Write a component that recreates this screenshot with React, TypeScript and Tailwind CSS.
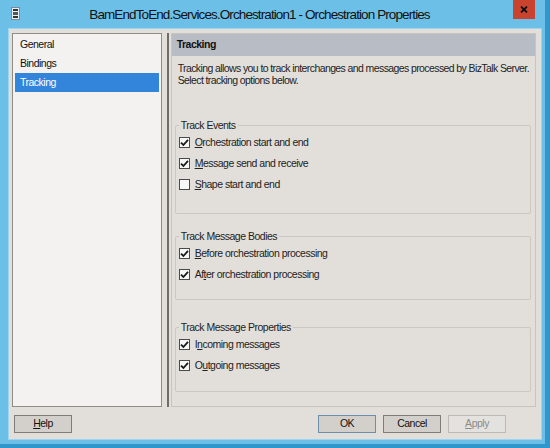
import React from "react";

const font = { fontFamily: '"Liberation Sans", Arial, sans-serif' };

// Checkbox glyph, Win8 style
const Check: React.FC<{ on: boolean }> = ({ on }) => (
  <span className="w-[11px] h-[11px] border border-[#4a4a4a] bg-[#f7f7f7] flex items-center justify-center shrink-0">
    {on && (
      <svg width="9" height="9" viewBox="0 0 9 9">
        <path d="M1 4.6 L3.4 7 L8 1.8" fill="none" stroke="#1a1a1a" strokeWidth="1.8" />
      </svg>
    )}
  </span>
);

// label with an underlined accelerator key
const Acc: React.FC<{ text: string; at: number }> = ({ text, at }) => (
  <span>
    {text.slice(0, at)}
    <span className="underline underline-offset-[1px]">{text[at]}</span>
    {text.slice(at + 1)}
  </span>
);

type Item = { text: string; at: number; on: boolean };

const Group: React.FC<{ title: string; items: Item[]; h: string }> = ({ title, items, h }) => (
  <fieldset className={`border border-[#cbc8c3] rounded-[2px] ml-[3px] mr-[4px] px-[3px] ${h}`}>
    <legend className="px-[2px] text-[#222]">{title}</legend>
    <div className="flex flex-col gap-[9px] pt-[3px]">
      {items.map((it) => (
        <div key={it.text} className="flex items-center gap-[5px] h-[12px]">
          <Check on={it.on} />
          <Acc text={it.text} at={it.at} />
        </div>
      ))}
    </div>
  </fieldset>
);

const Button: React.FC<{ children: React.ReactNode; kind?: "def" | "normal" | "off" }> = ({
  children,
  kind = "normal",
}) => {
  const look =
    kind === "def"
      ? "border-[#6d8fae] bg-[#d3d0cc] text-[#111]"
      : kind === "off"
      ? "border-[#bdbab6] bg-[#e4e2df] text-[#8d8b88]"
      : "border-[#7f7c79] bg-[#d3d0cc] text-[#111]";
  return (
    <div className={`w-[58px] h-[18px] border flex items-center justify-center ${look}`}>{children}</div>
  );
};

export default function App() {
  return (
    <div
      className="w-[550px] h-[448px] bg-[#6cc0e8] flex flex-col border-r-[5px] border-b-[4px] border-[#2f97cc] text-[10.5px] tracking-[-0.5px]"
      style={font}
    >
      {/* title bar */}
      <div className="h-[28px] flex items-start relative shrink-0">
        <div className="absolute left-[11px] top-[7px] w-[9px] h-[13px] bg-[#e8eef3] border border-[#7a8a99] flex flex-col items-center justify-center gap-[1px]">
          <span className="w-[5px] h-[2px] bg-[#333]" />
          <span className="w-[5px] h-[3px] bg-[#555]" />
          <span className="w-[5px] h-[2px] bg-[#333]" />
        </div>
        <div className="flex-1 text-center pt-[5px] text-[13.5px] tracking-[-0.9px] text-[#111] pr-[26px]">
          BamEndToEnd.Services.Orchestration1 - Orchestration Properties
        </div>
        <div className="absolute right-[10px] top-0 w-[22px] h-[19px] bg-[#c9432f] flex items-center justify-center">
          <svg width="8" height="7" viewBox="0 0 8 7">
            <path d="M1 0.5 L7 6.5 M7 0.5 L1 6.5" stroke="#111" strokeWidth="1.8" />
          </svg>
        </div>
      </div>

      {/* client area */}
      <div className="flex-1 ml-[8px] mr-[3px] mb-[4px] bg-[#e2dfdb] flex flex-col border border-[#9fd3ee]">
        <div className="flex h-[374px] mt-[4px] ml-[3px] mr-[5px] gap-[5px]">
          {/* nav list */}
          <div className="w-[150px] bg-[#f3f2f0] border border-[#8f8d8a] pt-[1px] px-[2px] flex flex-col text-[#111]">
            <div className="h-[19px] flex items-center pl-[5px]">General</div>
            <div className="h-[19px] flex items-center pl-[5px]">Bindings</div>
            <div className="h-[19px] flex items-center pl-[5px] bg-[#3385db] text-white">Tracking</div>
          </div>

          {/* properties page */}
          <div className="flex-1 border-l-[2px] border-[#6f6d6a] pl-[2px]">
            <div className="h-full border border-[#c8c5c1] flex flex-col">
              <div className="h-[22px] bg-[#b8bcc5] flex items-center pl-[5px] font-bold text-[#111] shrink-0">
                Tracking
              </div>
              <div className="px-[6px] pt-[6px] leading-[12px] text-[#222] h-[62px] shrink-0 whitespace-nowrap tracking-[-0.6px]">
                <div>Tracking allows you to track interchanges and messages processed by BizTalk Server.</div>
                <div>Select tracking options below.</div>
              </div>
              <div className="flex flex-col text-[#222]">
                <Group
                  title="Track Events"
                  h="h-[96px]"
                  items={[
                    { text: "Orchestration start and end", at: 0, on: true },
                    { text: "Message send and receive", at: 0, on: true },
                    { text: "Shape start and end", at: 0, on: false },
                  ]}
                />
                <div className="h-[15px]" />
                <Group
                  title="Track Message Bodies"
                  h="h-[71px]"
                  items={[
                    { text: "Before orchestration processing", at: 0, on: true },
                    { text: "After orchestration processing", at: 2, on: true },
                  ]}
                />
                <div className="h-[20px]" />
                <Group
                  title="Track Message Properties"
                  h="h-[72px]"
                  items={[
                    { text: "Incoming messages", at: 1, on: true },
                    { text: "Outgoing messages", at: 1, on: true },
                  ]}
                />
              </div>
            </div>
          </div>
        </div>

        {/* buttons */}
        <div className="flex items-center mt-[8px] ml-[5px] mr-[35px]">
          <Button>
            <Acc text="Help" at={0} />
          </Button>
          <div className="flex-1" />
          <div className="flex gap-[7px]">
            <Button kind="def">OK</Button>
            <Button>Cancel</Button>
            <Button kind="off">
              <Acc text="Apply" at={0} />
            </Button>
          </div>
        </div>
      </div>
    </div>
  );
}
